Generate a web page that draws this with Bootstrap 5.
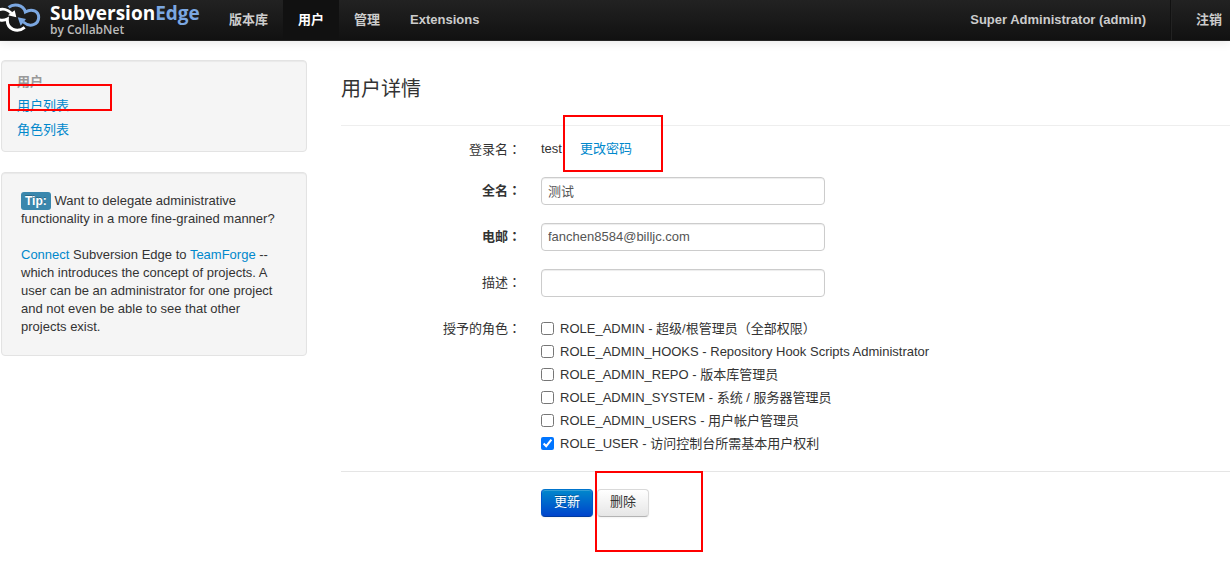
<!DOCTYPE html>
<html lang="zh-CN">
<head>
<meta charset="utf-8">
<meta name="viewport" content="width=device-width, initial-scale=1">
<title>用户详情 - Subversion Edge</title>
<link href="https://cdn.jsdelivr.net/npm/bootstrap@5.3.0/dist/css/bootstrap.min.css" rel="stylesheet">
<style>
body { font: 13px/18px "Liberation Sans", "Noto Sans CJK SC", sans-serif; color: #333; background: #fff; min-height: 100vh; }
a { color: #08c; text-decoration: none; }
.topbar { height: 41px; background: linear-gradient(#222, #111); border-bottom: 1px solid #252525; box-shadow: 0 1px 10px rgba(0,0,0,.1); font-weight: 700; }
.topbar .nav-link { color: #ccc; padding: 10px 15px; line-height: 20px; height: 40px; }
.topbar .nav-link.active { color: #fff; background: #111; }
.brand-box { width: 214px; height: 40px; }
.brand-text { font-family: "Open Sans", sans-serif; padding-left: 8px; }
.brand-name { font-size: 19px; line-height: 26px; color: #fff; }
.brand-name span { color: #7ba7e1; }
.brand-by { font-size: 12px; line-height: 8px; font-weight: 600; color: #bbb; }
.split { width: 2px; height: 40px; margin: 0 9px; background: #111; border-right: 1px solid #222; }
.page { gap: 34px; padding: 19px 0 0 1px; }
.side { flex: 0 0 306px; }
.panel { background: #f5f5f5; border: 1px solid #e3e3e3; border-radius: 4px; box-shadow: inset 0 1px 1px rgba(0,0,0,.05); margin-bottom: 20px; }
.side-head { color: #999; font-weight: 700; }
.side-menu { padding: 12px 15px 12px; }
.side-menu li { line-height: 18px; margin-bottom: 6px; }
.side-menu li:last-child { margin-bottom: 0; }
.tip-box { padding: 19px; }
.tip-label { background: #3a87ad; border-radius: 3px; color: #fff; font-size: 12px; font-weight: 700; padding: 2px 4px; text-shadow: 0 -1px 0 rgba(0,0,0,.25); }
h1 { font-size: 20px; line-height: 36px; margin: 0; padding-bottom: 18px; border-bottom: 1px solid #eee; font-weight: 400; }
.page-main { padding-top: 11px; }
.field-row { display: grid; grid-template-columns: 180px 1fr; column-gap: 20px; margin-bottom: 18px; }
.login-row { margin-top: 14px; }
.login-value { gap: 18px; }
.field-name { text-align: right; padding-top: 4px; }
.mid { font-family: "Noto Sans CJK TC", sans-serif; }
.field-row .form-control { width: 284px; height: 28px; font-size: 13px; line-height: 18px; padding: 3px 6px 5px; color: #555; border: 1px solid #ccc; border-radius: 4px; box-shadow: inset 0 1px 1px rgba(0,0,0,.075); }
.role-list { padding-top: 2px; }
.role { display: flex; align-items: center; gap: 6px; height: 23px; }
.role input { width: 13px; height: 13px; margin: 0; }
.roles-row { margin-bottom: 16px; }
.actions { border-top: 1px solid #e5e5e5; padding: 17px 0 18px 200px; gap: 4px; }
.actions .btn { width: 52px; height: 28px; padding: 3px 0 5px; font-size: 13px; line-height: 18px; border-radius: 4px; box-shadow: inset 0 1px 0 rgba(255,255,255,.2), 0 1px 2px rgba(0,0,0,.05); }
.btn-update { color: #fff; background: linear-gradient(#08c, #04c); border-color: #0074cc #0055cc #003a9e; text-shadow: 0 -1px 0 rgba(0,0,0,.25); }
.btn-delete { color: #333; background: linear-gradient(#fff, #e6e6e6); border-color: #d9d9d9 #d9d9d9 #b3b3b3; }
.marker { position: absolute; border: 2px solid #f00; pointer-events: none; }
.marker-list { left: -9px; top: -14px; width: 104px; height: 27px; }
.marker-password { left: -17px; top: -25px; width: 100px; height: 57px; }
.marker-delete { left: -2px; top: -18px; width: 108px; height: 81px; }
</style>
</head>
<body>
<nav class="topbar d-flex">
  <a class="brand-box d-flex" href="#">
    <svg width="42" height="36" viewBox="0 0 126 108" fill="none" stroke-width="9" aria-hidden="true">
      <path stroke="#fff" d="M-6 31 C8 24 24 29 34 40M-6 58 C4 62 12 62 22 57 C20 88 52 100 74 82"/>
      <path fill="#fff" d="M24 46 L44 31 L49 52 Z"/>
      <path stroke="#7ba7e1" d="M26 22 C40 10 70 12 76 36 C96 24 116 34 116 52 C116 74 90 84 70 66"/>
      <path fill="#7ba7e1" d="M53 52 L78 57 L62 77 Z"/>
    </svg>
    <span class="brand-text"><span class="brand-name d-block">Subversion<span>Edge</span></span><span class="brand-by d-block">by CollabNet</span></span>
  </a>
  <div class="nav flex-nowrap">
    <a class="nav-link" href="#">版本库</a>
    <a class="nav-link active" href="#">用户</a>
    <a class="nav-link" href="#">管理</a>
    <a class="nav-link" href="#">Extensions</a>
  </div>
  <div class="nav flex-nowrap ms-auto">
    <a class="nav-link" href="#">Super Administrator (admin)</a>
    <span class="split"></span>
    <a class="nav-link pe-2" href="#">注销</a>
  </div>
</nav>
<div class="page d-flex">
  <aside class="side">
    <div class="panel">
      <ul class="side-menu list-unstyled mb-0">
        <li class="side-head">用户</li>
        <li><span class="position-relative"><a href="#">用户列表</a><span class="marker marker-list"></span></span></li>
        <li><a href="#">角色列表</a></li>
      </ul>
    </div>
    <div class="panel tip-box">
      <p class="mb-0"><span class="tip-label">Tip:</span> Want to delegate administrative functionality in a more fine-grained manner?</p>
      <br>
      <p class="mb-0"><a href="#">Connect</a> Subversion Edge to <a href="#">TeamForge</a> -- which introduces the concept of projects. A user can be an administrator for one project and not even be able to see that other projects exist.</p>
    </div>
  </aside>
  <main class="page-main flex-grow-1">
    <h1>用户详情</h1>
    <form>
      <div class="field-row login-row">
        <span class="field-name pt-0">登录名<span class="mid" lang="zh-TW">：</span></span>
        <div class="login-value d-flex align-items-start"><span>test</span><span class="position-relative"><a class="d-block" href="#">更改密码</a><span class="marker marker-password"></span></span></div>
      </div>
      <div class="field-row">
        <label class="field-name fw-bold" for="fullname">全名<span class="mid" lang="zh-TW">：</span></label>
        <div><input class="form-control" id="fullname" type="text" value="测试"></div>
      </div>
      <div class="field-row">
        <label class="field-name fw-bold" for="email">电邮<span class="mid" lang="zh-TW">：</span></label>
        <div><input class="form-control" id="email" type="text" value="fanchen8584@billjc.com"></div>
      </div>
      <div class="field-row">
        <label class="field-name" for="desc">描述<span class="mid" lang="zh-TW">：</span></label>
        <div><input class="form-control" id="desc" type="text"></div>
      </div>
      <div class="field-row roles-row">
        <span class="field-name">授予的角色<span class="mid" lang="zh-TW">：</span></span>
        <div class="role-list">
          <label class="role"><input type="checkbox">ROLE_ADMIN - 超级/根管理员（全部权限）</label>
          <label class="role"><input type="checkbox">ROLE_ADMIN_HOOKS - Repository Hook Scripts Administrator</label>
          <label class="role"><input type="checkbox">ROLE_ADMIN_REPO - 版本库管理员</label>
          <label class="role"><input type="checkbox">ROLE_ADMIN_SYSTEM - 系统 / 服务器管理员</label>
          <label class="role"><input type="checkbox">ROLE_ADMIN_USERS - 用户帐户管理员</label>
          <label class="role"><input type="checkbox" checked>ROLE_USER - 访问控制台所需基本用户权利</label>
        </div>
      </div>
      <div class="actions d-flex">
        <button class="btn btn-update" type="submit">更新</button>
        <div class="position-relative"><button class="btn btn-delete" type="button">删除</button><span class="marker marker-delete"></span></div>
      </div>
    </form>
  </main>
</div>
<script src="https://cdn.jsdelivr.net/npm/bootstrap@5.3.0/dist/js/bootstrap.bundle.min.js"></script>
</body>
</html>
